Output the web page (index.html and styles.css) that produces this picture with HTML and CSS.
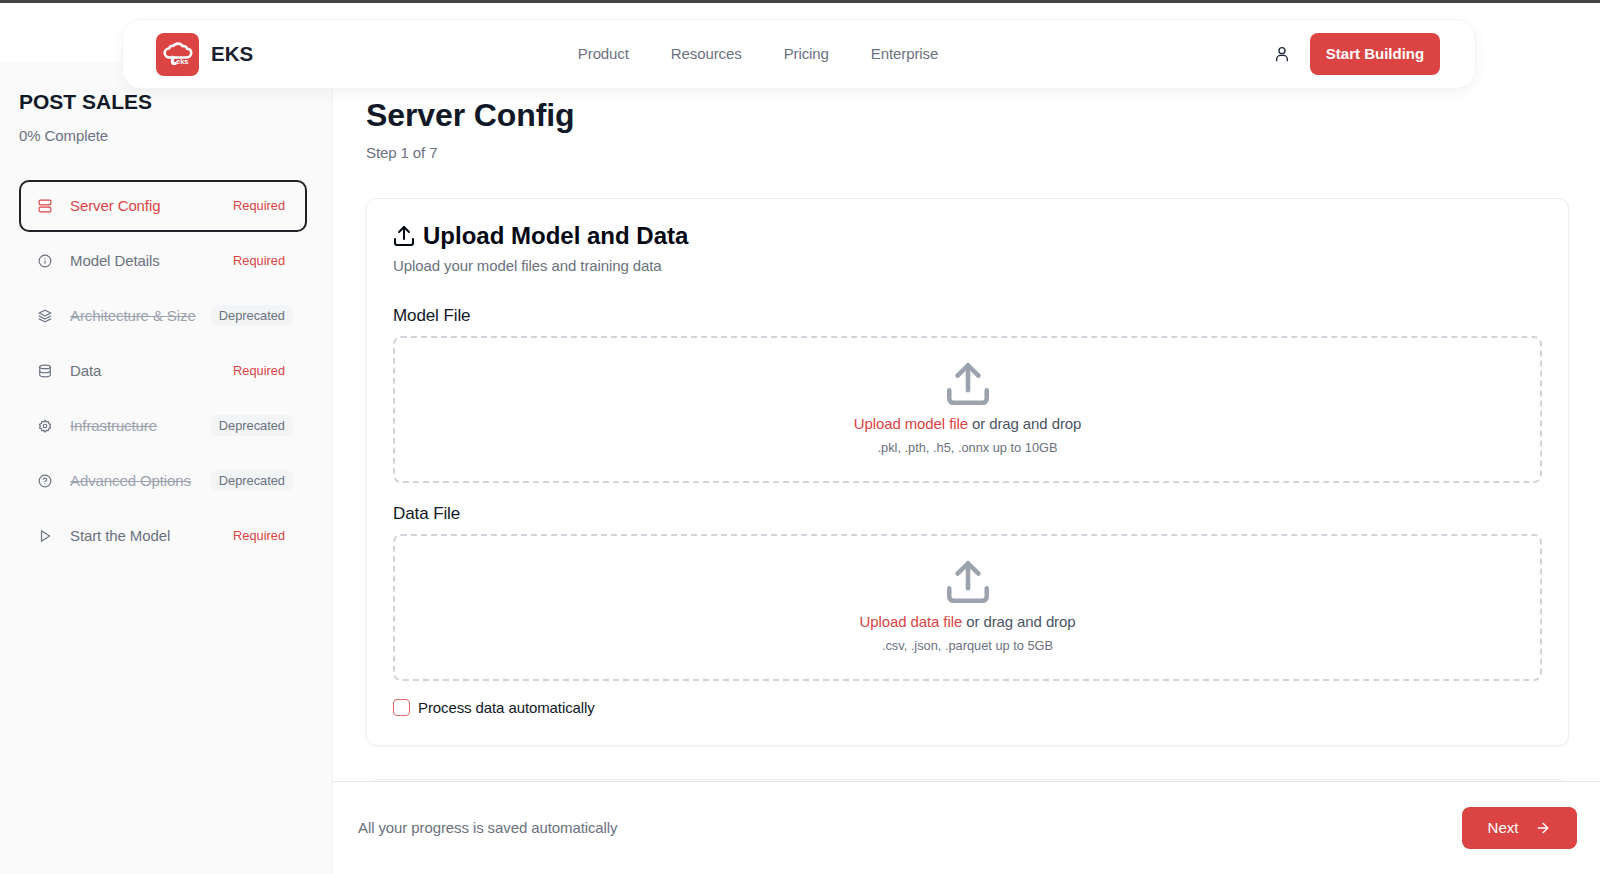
FILE: index.html
```html
<!DOCTYPE html>
<html lang="en">
<head>
  <meta charset="UTF-8" />
  <meta name="viewport" content="width=device-width, initial-scale=1.0"/>
  <title>EKS - Post Sales</title>
  <link rel="stylesheet" href="styles.css">
</head>
<body>

<!-- Floating nav -->
<header class="topNav">
  <div class="brand">
    <div class="brandLogo">
      <svg viewBox="0 0 42 42" width="42" height="42" fill="none">
        <path d="M13 24.5c-3.2 0-5.3-2-5.3-4.6 0-2.5 1.9-4.3 4.3-4.4 .8-2.1 2.700-3 4.500-2.600 1-1.500 2.700-2.300 4.500-2.300 2 0 3.700 1 4.600 2.500 2-.3 4 .9 4.600 2.700 2.300 .2 4 2 4 4.200 0 2.500-2.100 4.500-5 4.500H13z" stroke="#fff" stroke-width="2.600" stroke-linejoin="round"/>
        <path d="M15.500 24v5c0 1 .7 1.500 1.700 1.500h1" stroke="#fff" stroke-width="3.200" stroke-linecap="round"/>
        <text x="19" y="31" class="brandLogoText">eks</text>
      </svg>
    </div>
    <span class="brandName">EKS</span>
  </div>
  <nav class="navLinks">
    <a href="#">Product</a>
    <a href="#">Resources</a>
    <a href="#">Pricing</a>
    <a href="#">Enterprise</a>
  </nav>
  <div class="navRight">
    <svg class="navUser" viewBox="0 0 24 24" width="16" height="16" fill="none" stroke="#1f2937" stroke-width="2" stroke-linecap="round" stroke-linejoin="round">
      <circle cx="12" cy="7" r="4.500"/>
      <path d="M4 22v-2a6 6 0 0 1 6-6h4a6 6 0 0 1 6 6v2"/>
    </svg>
    <button class="startBtn">Start Building</button>
  </div>
</header>

<div class="layout">
  <aside class="sidebar">
    <h2 class="sideTitle">POST SALES</h2>
    <p class="sideProgress">0% Complete</p>

    <ul class="stepList">
      <li class="step active">
        <svg class="stepIcon" viewBox="0 0 24 24"><rect x="2" y="2" width="20" height="8" rx="2"/><rect x="2" y="14" width="20" height="8" rx="2"/></svg>
        <span class="stepName">Server Config</span>
        <span class="tagRequired">Required</span>
      </li>
      <li class="step">
        <svg class="stepIcon" viewBox="0 0 24 24"><circle cx="12" cy="12" r="10"/><path d="M12 16v-4M12 8h.01"/></svg>
        <span class="stepName">Model Details</span>
        <span class="tagRequired">Required</span>
      </li>
      <li class="step old">
        <svg class="stepIcon" viewBox="0 0 24 24"><path d="M12 2 2 7l10 5 10-5-10-5z"/><path d="m2 12 10 5 10-5"/><path d="m2 17 10 5 10-5"/></svg>
        <span class="stepName">Architecture &amp; Size</span>
        <span class="tagOld">Deprecated</span>
      </li>
      <li class="step">
        <svg class="stepIcon" viewBox="0 0 24 24"><ellipse cx="12" cy="5" rx="9" ry="3"/><path d="M3 5v14c0 1.700 4 3 9 3s9-1.300 9-3V5"/><path d="M3 12c0 1.700 4 3 9 3s9-1.300 9-3"/></svg>
        <span class="stepName">Data</span>
        <span class="tagRequired">Required</span>
      </li>
      <li class="step old">
        <svg class="stepIcon" viewBox="0 0 24 24"><circle cx="12" cy="12" r="3"/><path d="M12 2l2 3 3.500-.8.700 3.500 3.300 1.500-1.500 3 1.500 3-3.300 1.500-.7 3.500-3.500-.8-2 3-2-3-3.500 .8-.7-3.500L2.500 15.200l1.500-3-1.500-3 3.300-1.500.7-3.500 3.500 .8z"/></svg>
        <span class="stepName">Infrastructure</span>
        <span class="tagOld">Deprecated</span>
      </li>
      <li class="step old">
        <svg class="stepIcon" viewBox="0 0 24 24"><circle cx="12" cy="12" r="10"/><path d="M9.100 9a3 3 0 0 1 5.800 1c0 2-3 3-3 3"/><path d="M12 17h.01"/></svg>
        <span class="stepName">Advanced Options</span>
        <span class="tagOld">Deprecated</span>
      </li>
      <li class="step">
        <svg class="stepIcon" viewBox="0 0 24 24"><path d="m6 3 14 9-14 9V3z"/></svg>
        <span class="stepName">Start the Model</span>
        <span class="tagRequired">Required</span>
      </li>
    </ul>
  </aside>

  <main class="mainCol">
    <div class="scrollArea">
      <h1 class="pageTitle">Server Config</h1>
      <p class="pageStep">Step 1 of 7</p>

      <section class="card">
        <div class="cardHead">
          <svg viewBox="0 0 24 24" width="24" height="24" fill="none" stroke="#030712" stroke-width="2" stroke-linecap="round" stroke-linejoin="round">
            <path d="M21 15v4a2 2 0 0 1-2 2H5a2 2 0 0 1-2-2v-4"/><path d="m17 8-5-5-5 5"/><path d="M12 3v12"/>
          </svg>
          <h2>Upload Model and Data</h2>
        </div>
        <p class="cardSub">Upload your model files and training data</p>

        <label class="fieldLabel">Model File</label>
        <div class="dropZone">
          <svg class="dropIcon" viewBox="0 0 24 24" width="50" height="50" fill="none" stroke="#9ca3af" stroke-width="2.200" stroke-linecap="round" stroke-linejoin="round">
            <path d="M21 15v4a2 2 0 0 1-2 2H5a2 2 0 0 1-2-2v-4"/><path d="m17 8-5-5-5 5"/><path d="M12 3v12"/>
          </svg>
          <p class="dropText"><span class="dropLink">Upload model file</span> or drag and drop</p>
          <p class="dropHint">.pkl, .pth, .h5, .onnx up to 10GB</p>
        </div>

        <label class="fieldLabel">Data File</label>
        <div class="dropZone">
          <svg class="dropIcon" viewBox="0 0 24 24" width="50" height="50" fill="none" stroke="#9ca3af" stroke-width="2.200" stroke-linecap="round" stroke-linejoin="round">
            <path d="M21 15v4a2 2 0 0 1-2 2H5a2 2 0 0 1-2-2v-4"/><path d="m17 8-5-5-5 5"/><path d="M12 3v12"/>
          </svg>
          <p class="dropText"><span class="dropLink">Upload data file</span> or drag and drop</p>
          <p class="dropHint">.csv, .json, .parquet up to 5GB</p>
        </div>

        <div class="checkRow">
          <span class="checkBox"></span>
          <span>Process data automatically</span>
        </div>
      </section>

      <section class="card nextCard"></section>
    </div>

    <footer class="footerBar">
      <span class="footerNote">All your progress is saved automatically</span>
      <button class="nextBtn">
        <span class="nextLabel">Next</span>
        <svg viewBox="0 0 24 24" width="16" height="16" fill="none" stroke="#fff" stroke-width="2" stroke-linecap="round" stroke-linejoin="round"><path d="M5 12h14"/><path d="m12 5 7 7-7 7"/></svg>
      </button>
    </footer>
  </main>
</div>

</body>
</html>
```

FILE: styles.css
```css
* { box-sizing: border-box; }

html, body {
  height: 100%;
}

body {
  margin: 0;
  font-family: "Liberation Sans", Arial, sans-serif;
  letter-spacing: -0.1px;
  background: #fff;
  color: #111827;
  border-top: 3px solid #444;
  overflow: hidden;
}

p, h1, h2, ul {
  margin: 0;
  padding: 0;
}

/* floating nav */
.topNav {
  position: absolute;
  top: 19px;
  left: 122px;
  width: 1354px;
  height: 70px;
  display: flex;
  align-items: center;
  justify-content: space-between;
  padding: 0 35px 0 33px;
  background: rgba(255, 255, 255, 0.95);
  border: 1px solid #f3f4f6;
  border-radius: 20px;
  box-shadow: 0 4px 14px rgba(0, 0, 0, 0.05);
  z-index: 10;
}

.brand {
  display: flex;
  align-items: center;
  gap: 12px;
  width: 104px;
}

.brandLogo {
  width: 43px;
  height: 43px;
  background: #dc4444;
  border-radius: 8px;
  display: flex;
  align-items: center;
  justify-content: center;
}

.brandLogoText {
  font-family: "Liberation Sans", Arial, sans-serif;
  font-size: 7.5px;
  font-weight: 700;
  fill: #fff;
  letter-spacing: 0;
}

.brandName {
  font-size: 20.5px;
  font-weight: 700;
  color: #1a2030;
  letter-spacing: 0;
}

.navLinks {
  display: flex;
  gap: 42px;
  margin-left: -18px;
  padding-bottom: 2px;
}

.navLinks a {
  font-size: 15px;
  color: #6b7280;
  text-decoration: none;
}

.navRight {
  display: flex;
  align-items: center;
  gap: 20px;
}

.startBtn {
  width: 130px;
  height: 42px;
  padding: 0 0 2px;
  background: #dc4444;
  color: #fff;
  border: none;
  border-radius: 8px;
  font-family: inherit;
  font-size: 15px;
  font-weight: 700;
  letter-spacing: 0;
}

/* page columns */
.layout {
  display: flex;
  height: 871px;
}

.sidebar {
  width: 333px;
  margin-top: 59px;
  padding: 28px 19px 0;
  background: #fafafa;
  border-right: 1px solid #f0f1f3;
  flex-shrink: 0;
}

.sideTitle {
  font-size: 21px;
  font-weight: 700;
  color: #111827;
  line-height: 24px;
  letter-spacing: 0;
}

.sideProgress {
  margin-top: 10px;
  margin-bottom: 32px;
  font-size: 15px;
  line-height: 24px;
  color: #6b7280;
}

.stepList {
  list-style: none;
  display: flex;
  flex-direction: column;
  gap: 3px;
  width: 288px;
}

.step {
  height: 52px;
  display: flex;
  align-items: center;
  padding: 0 12px 0 17px;
  border: 2px solid transparent;
  border-radius: 10px;
}

.step.active {
  border-color: #1f2328;
}

.stepIcon {
  width: 14px;
  height: 14px;
  fill: none;
  stroke: #6b7280;
  stroke-width: 2;
  stroke-linecap: round;
  stroke-linejoin: round;
  flex-shrink: 0;
  margin-right: 18px;
}

.stepName {
  flex: 1;
  padding-bottom: 2px;
  font-size: 15px;
  color: #6b7280;
  white-space: nowrap;
}

.tagRequired {
  font-size: 12.8px;
  color: #dc4444;
  padding-right: 8px;
  margin-bottom: 2px;
  letter-spacing: 0;
}

.tagOld {
  font-size: 12.8px;
  color: #6b7280;
  background: #f3f4f6;
  border-radius: 6px;
  padding: 3px 8px;
  margin-bottom: 1px;
  line-height: 15px;
  letter-spacing: 0;
}

.step.active .stepIcon { stroke: #dc4444; }
.step.active .stepName { color: #dc4444; }
.step.old .stepName {
  color: #9ca3af;
  text-decoration: line-through;
}

/* right side */
.mainCol {
  flex: 1;
  min-width: 0;
  display: flex;
  flex-direction: column;
}

.scrollArea {
  flex: 1;
  min-height: 0;
  overflow: hidden;
  padding: 93px 31px 0 33px;
}

.pageTitle {
  font-size: 32px;
  font-weight: 700;
  line-height: 38px;
  color: #111827;
}

.pageStep {
  margin-top: 7px;
  font-size: 15px;
  line-height: 24px;
  color: #6b7280;
}

.card {
  margin-top: 33px;
  height: 548px;
  padding: 23px 26px;
  background: #fff;
  border: 1px solid #eceef1;
  border-radius: 10px;
  box-shadow: 0 1px 2px rgba(0, 0, 0, 0.04);
}

.nextCard {
  margin-top: 33px;
}

.cardHead {
  display: flex;
  align-items: center;
  gap: 7px;
  height: 28px;
  margin-left: -1px;
}

.cardHead h2 {
  font-size: 24px;
  font-weight: 700;
  color: #030712;
  letter-spacing: 0;
}

.cardSub {
  margin-top: 6px;
  font-size: 15px;
  line-height: 20px;
  color: #6b7280;
}

.fieldLabel {
  display: block;
  margin-top: 29px;
  font-size: 17px;
  line-height: 22px;
  color: #111827;
}

.fieldLabel + .dropZone {
  margin-top: 9px;
}

.dropZone {
  height: 147px;
  padding-top: 21px;
  border: 2px dashed #d1d5db;
  border-radius: 8px;
  display: flex;
  flex-direction: column;
  align-items: center;
}

.dropZone + .fieldLabel {
  margin-top: 20px;
}

.dropIcon {
  flex-shrink: 0;
}

.dropText {
  margin-top: 3px;
  font-size: 15px;
  line-height: 24px;
  color: #4b5563;
}

.dropLink {
  color: #dc4444;
}

.dropHint {
  margin-top: 3px;
  font-size: 12.8px;
  line-height: 18px;
  color: #6b7280;
  letter-spacing: 0;
}

.checkRow {
  display: flex;
  align-items: center;
  gap: 8px;
  margin-top: 18px;
  font-size: 15px;
  color: #111827;
}

.checkBox {
  width: 17px;
  height: 17px;
  border: 1.500px solid #dc4444;
  border-radius: 4px;
  background: #fff;
  opacity: 0.8;
}

.footerBar {
  height: 93px;
  flex-shrink: 0;
  display: flex;
  align-items: center;
  justify-content: space-between;
  padding: 0 23px 0 25px;
  background: #fff;
  border-top: 1px solid #e5e7eb;
}

.footerNote {
  padding-bottom: 2px;
  font-size: 15px;
  color: #6b7280;
}

.nextBtn {
  width: 115px;
  height: 42px;
  display: flex;
  align-items: center;
  justify-content: center;
  gap: 17px;
  background: #dc4444;
  color: #fff;
  border: none;
  border-radius: 8px;
  font-family: inherit;
  font-size: 15px;
  letter-spacing: 0;
}

.nextLabel {
  padding-bottom: 2px;
}
```
